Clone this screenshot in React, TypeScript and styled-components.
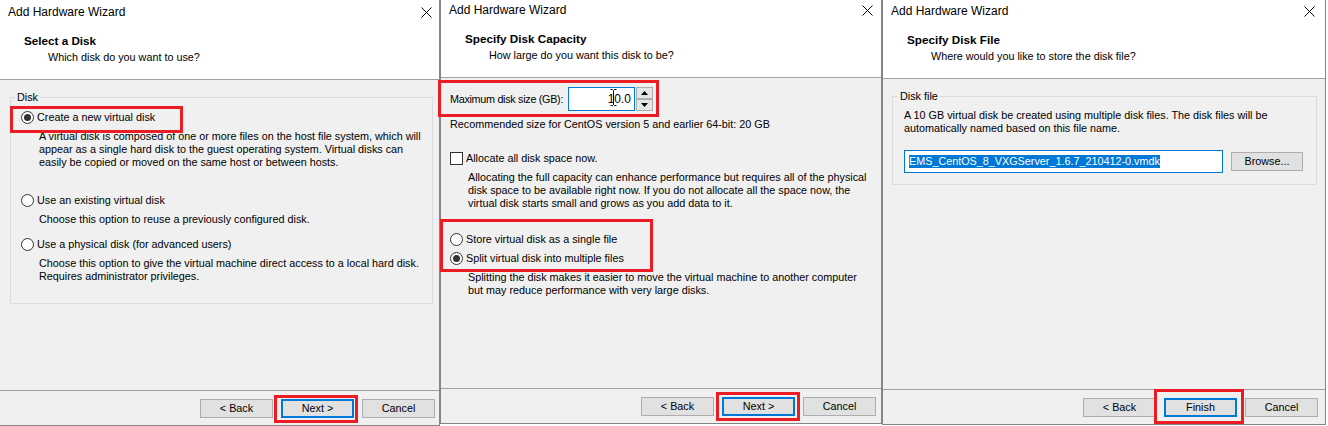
import React from 'react';
import styled, { createGlobalStyle } from 'styled-components';

const GlobalStyle = createGlobalStyle`
  html, body { margin: 0; padding: 0; background: #ffffff; }
  body {
    font-family: "Liberation Sans", Arial, sans-serif;
    font-size: 10.8px;
    color: #000;
  }
  * { box-sizing: border-box; }
`;

const Stage = styled.div`
  display: flex;
  align-items: flex-start;
  width: 1328px;
  height: 426px;
  overflow: hidden;
  background: #ffffff;
`;

const Dialog = styled.div<{ $width: number; $shift: number; $leftEdge?: boolean }>`
  flex: none;
  width: ${(p) => p.$width}px;
  height: 426px;
  margin-top: ${(p) => -p.$shift}px;
  display: flex;
  flex-direction: column;
  background: #f0f0f0;
  border-right: 1px solid #858585;
  border-bottom: 1px solid #858585;
  border-left: ${(p) => (p.$leftEdge ? '1px solid #858585' : 'none')};
`;

const Header = styled.div`
  flex: none;
  height: 80px;
  background: #ffffff;
  border-bottom: 1px solid #a0a0a0;
  padding-top: 4px;
`;

const TitleRow = styled.div<{ $closeInset: number }>`
  display: flex;
  align-items: center;
  justify-content: space-between;
  height: 16px;
  padding: 0 ${(p) => p.$closeInset}px 0 8px;
  font-size: 12px;
  line-height: 16px;
`;

const CloseGlyph = styled.svg`
  display: block;
  width: 11px;
  height: 11px;
`;

const Heading = styled.div`
  margin-top: 13px;
  padding-left: 24px;
  font-weight: bold;
  font-size: 11.7px;
  line-height: 16px;
`;

const Subheading = styled.div`
  margin-top: 2px;
  padding-left: 48px;
  line-height: 13px;
`;

const Body = styled.div`
  flex: 1;
  position: relative;
  display: flex;
  flex-direction: column;
`;

const Footer = styled.div`
  flex: none;
  height: 35px;
  border-top: 1px solid #a0a0a0;
  display: flex;
  align-items: flex-start;
  gap: 8px;
  padding: 8px 0 0 200px;
`;

const Button = styled.div<{ $default?: boolean; $width?: number }>`
  flex: none;
  width: ${(p) => p.$width ?? 73}px;
  height: 19px;
  background: #e1e1e1;
  border: ${(p) => (p.$default ? '2px solid #0078d7' : '1px solid #adadad')};
  display: flex;
  align-items: center;
  justify-content: center;
  line-height: 13px;
  white-space: nowrap;
`;

const Marked = styled.div`
  position: relative;
  display: flex;
`;

const Highlight = styled.div<{ $l: number; $t: number; $w: number; $h: number }>`
  position: absolute;
  left: ${(p) => p.$l}px;
  top: ${(p) => p.$t}px;
  width: ${(p) => p.$w}px;
  height: ${(p) => p.$h}px;
  border: 3px solid #ec1c24;
  pointer-events: none;
  z-index: 5;
`;

const GroupBox = styled.fieldset<{ $margin: string; $pad: string }>`
  margin: ${(p) => p.$margin};
  padding: ${(p) => p.$pad};
  min-width: 0;
  border: 1px solid #dcdcdc;
  display: flex;
  flex-direction: column;
`;

const Legend = styled.legend<{ $offset: number }>`
  margin-left: ${(p) => p.$offset}px;
  padding: 0 2px;
  line-height: 13px;
`;

const OptionRow = styled.div<{ $top: number; $indent: number }>`
  display: flex;
  align-items: center;
  gap: 3px;
  height: 16px;
  margin-top: ${(p) => p.$top}px;
  padding-left: ${(p) => p.$indent}px;
  white-space: nowrap;
`;

const Radio = styled.span<{ $checked?: boolean }>`
  flex: none;
  width: 13px;
  height: 13px;
  border-radius: 50%;
  border: 1px solid #333333;
  background: #ffffff;
  display: flex;
  align-items: center;
  justify-content: center;
  &::after {
    content: '';
    display: ${(p) => (p.$checked ? 'block' : 'none')};
    width: 7px;
    height: 7px;
    border-radius: 50%;
    background: #333333;
  }
`;

const CheckBox = styled.span`
  flex: none;
  width: 13px;
  height: 13px;
  border: 1px solid #333333;
  background: #ffffff;
`;

const Desc = styled.div<{ $top: number; $indent: number }>`
  margin-top: ${(p) => p.$top}px;
  padding-left: ${(p) => p.$indent}px;
  line-height: 13px;
  white-space: nowrap;
`;

const SizeRow = styled.div`
  display: flex;
  align-items: center;
  height: 24px;
  margin-top: 9px;
  padding-left: 9px;
`;

const SizeLabel = styled.span`
  flex: none;
  width: 118px;
  white-space: nowrap;
  letter-spacing: -0.3px;
`;

const NumberBox = styled.div`
  position: relative;
  flex: none;
  width: 67px;
  height: 24px;
  border: 1px solid #0078d7;
  background: #ffffff;
  display: flex;
  align-items: center;
  justify-content: flex-end;
  padding-right: 3px;
  font-size: 12px;
`;

const IBeam = styled.svg`
  position: absolute;
  left: 41px;
  top: 1px;
  width: 7px;
  height: 17px;
`;

const SpinColumn = styled.div`
  flex: none;
  margin-left: 1px;
  width: 17px;
  height: 24px;
  display: flex;
  flex-direction: column;
`;

const SpinButton = styled.div`
  flex: 1;
  border: 1px solid #adadad;
  background: #e5e5e5;
  display: flex;
  align-items: center;
  justify-content: center;
`;

const Arrow = styled.svg`
  display: block;
  width: 7px;
  height: 4px;
`;

const FileRow = styled.div`
  display: flex;
  align-items: center;
  gap: 8px;
  margin-top: 15px;
`;

const FileBox = styled.div`
  flex: none;
  width: 319px;
  height: 23px;
  border: 1px solid #0078d7;
  background: #ffffff;
  display: flex;
  align-items: center;
  padding-left: 4px;
`;

const Selected = styled.span`
  background: #0078d7;
  color: #ffffff;
  line-height: 13px;
  white-space: nowrap;
`;

const GroupInner = styled.div`
  padding-left: 11px;
  display: flex;
  flex-direction: column;
`;

function WizardHeader(props: { heading: string; sub: string; closeInset: number }) {
  return (
    <Header>
      <TitleRow $closeInset={props.closeInset}>
        <span>Add Hardware Wizard</span>
        <CloseGlyph viewBox="0 0 11 11">
          <path d="M0.5 0.5 L10.5 10.5 M10.5 0.5 L0.5 10.5" stroke="#000" strokeWidth="1" fill="none" />
        </CloseGlyph>
      </TitleRow>
      <Heading>{props.heading}</Heading>
      <Subheading>{props.sub}</Subheading>
    </Header>
  );
}

function WizardFooter(props: { primary: string; mark: { l: number; t: number; w: number; h: number } }) {
  const m = props.mark;
  return (
    <Footer>
      <Button>&lt; Back</Button>
      <Marked>
        <Button $default>{props.primary}</Button>
        <Highlight $l={m.l} $t={m.t} $w={m.w} $h={m.h} />
      </Marked>
      <Button>Cancel</Button>
    </Footer>
  );
}

function Lines({ lines, top, indent }: { lines: string[]; top: number; indent: number }) {
  return (
    <Desc $top={top} $indent={indent}>
      {lines.map((l, i) => (
        <div key={i}>{l}</div>
      ))}
    </Desc>
  );
}

export default function App() {
  return (
    <>
      <GlobalStyle />
      <Stage>
        {/* Panel 1 */}
        <Dialog $width={440} $shift={0}>
          <WizardHeader heading="Select a Disk" sub="Which disk do you want to use?" closeInset={7} />
          <Body>
            <GroupBox $margin="11px 6px 0 10px" $pad="0 0 20px 0">
              <Legend $offset={4}>Disk</Legend>
              <OptionRow $top={5} $indent={10}>
                <Radio $checked />
                <span>Create a new virtual disk</span>
              </OptionRow>
              <Lines
                top={5}
                indent={28}
                lines={[
                  'A virtual disk is composed of one or more files on the host file system, which will',
                  'appear as a single hard disk to the guest operating system. Virtual disks can',
                  'easily be copied or moved on the same host or between hosts.',
                ]}
              />
              <OptionRow $top={23} $indent={10}>
                <Radio />
                <span>Use an existing virtual disk</span>
              </OptionRow>
              <Lines top={5} indent={28} lines={['Choose this option to reuse a previously configured disk.']} />
              <OptionRow $top={10} $indent={10}>
                <Radio />
                <span>Use a physical disk (for advanced users)</span>
              </OptionRow>
              <Lines
                top={5}
                indent={28}
                lines={[
                  'Choose this option to give the virtual machine direct access to a local hard disk.',
                  'Requires administrator privileges.',
                ]}
              />
            </GroupBox>
            <Highlight $l={10} $t={26} $w={173} $h={27} />
          </Body>
          <WizardFooter primary="Next >" mark={{ l: -7, t: -4, w: 84, h: 28 }} />
        </Dialog>

        {/* Panel 2 */}
        <Dialog $width={442} $shift={2} $leftEdge>
          <WizardHeader heading="Specify Disk Capacity" sub="How large do you want this disk to be?" closeInset={8} />
          <Body>
            <SizeRow>
              <SizeLabel>Maximum disk size (GB):</SizeLabel>
              <NumberBox>
                <span>10.0</span>
                <IBeam viewBox="0 0 7 17">
                  <path d="M0.5 0.5 H2.5 L3.5 1.5 L4.5 0.5 H6.5 M3.5 1.5 V15.5 M0.5 16.5 H2.5 L3.5 15.5 L4.5 16.5 H6.5" stroke="#000" strokeWidth="1" fill="none" />
                </IBeam>
              </NumberBox>
              <SpinColumn>
                <SpinButton>
                  <Arrow viewBox="0 0 7 4">
                    <path d="M0 4 L3.5 0 L7 4 Z" fill="#000" />
                  </Arrow>
                </SpinButton>
                <SpinButton>
                  <Arrow viewBox="0 0 7 4">
                    <path d="M0 0 L7 0 L3.5 4 Z" fill="#000" />
                  </Arrow>
                </SpinButton>
              </SpinColumn>
            </SizeRow>
            <Lines top={7} indent={9} lines={['Recommended size for CentOS version 5 and earlier 64-bit: 20 GB']} />
            <OptionRow $top={19} $indent={9}>
              <CheckBox />
              <span>Allocate all disk space now.</span>
            </OptionRow>
            <Lines
              top={5}
              indent={27}
              lines={[
                'Allocating the full capacity can enhance performance but requires all of the physical',
                'disk space to be available right now. If you do not allocate all the space now, the',
                'virtual disk starts small and grows as you add data to it.',
              ]}
            />
            <OptionRow $top={21} $indent={9}>
              <Radio />
              <span>Store virtual disk as a single file</span>
            </OptionRow>
            <OptionRow $top={3} $indent={9}>
              <Radio $checked />
              <span>Split virtual disk into multiple files</span>
            </OptionRow>
            <Lines
              top={5}
              indent={27}
              lines={[
                'Splitting the disk makes it easier to move the virtual machine to another computer',
                'but may reduce performance with very large disks.',
              ]}
            />
            <Highlight $l={-3} $t={2} $w={221} $h={37} />
            <Highlight $l={-1} $t={141} $w={213} $h={53} />
          </Body>
          <WizardFooter primary="Next >" mark={{ l: -6, t: -5, w: 84, h: 29 }} />
        </Dialog>

        {/* Panel 3 */}
        <Dialog $width={444} $shift={1} $leftEdge>
          <WizardHeader heading="Specify Disk File" sub="Where would you like to store the disk file?" closeInset={10} />
          <Body>
            <GroupBox $margin="11px 8px 0 9px" $pad="0 0 11px 0">
              <Legend $offset={5}>Disk file</Legend>
              <GroupInner>
                <Lines
                  top={6}
                  indent={0}
                  lines={[
                    'A 10 GB virtual disk be created using multiple disk files. The disk files will be',
                    'automatically named based on this file name.',
                  ]}
                />
                <FileRow>
                  <FileBox>
                    <Selected>EMS_CentOS_8_VXGServer_1.6.7_210412-0.vmdk</Selected>
                  </FileBox>
                  <Button $width={72}>Browse...</Button>
                </FileRow>
              </GroupInner>
            </GroupBox>
          </Body>
          <WizardFooter primary="Finish" mark={{ l: -10, t: -9, w: 90, h: 35 }} />
        </Dialog>
      </Stage>
    </>
  );
}
